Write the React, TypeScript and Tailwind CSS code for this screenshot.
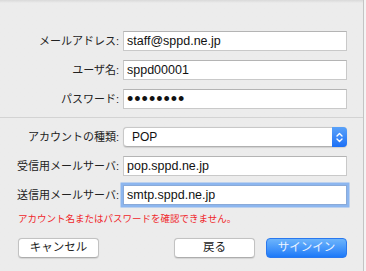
import { ChangeEvent, useState } from 'react';

const jp = { fontFamily: '"Liberation Sans", "Noto Sans CJK JP", sans-serif' };

function Field({
  label,
  value,
  type = 'text',
  focused = false,
  onChange,
}: {
  label: string;
  value: string;
  type?: string;
  focused?: boolean;
  onChange: (v: string) => void;
}) {
  return (
    <div className="flex items-center h-[20px]">
      <label className="w-[121px] pr-[2px] text-right text-[11px] text-[#222] whitespace-nowrap" style={jp}>
        {label}
      </label>
      <input
        type={type}
        value={value}
        onChange={(e: ChangeEvent<HTMLInputElement>) => onChange(e.target.value)}
        className={
          'ml-[2px] w-[224px] h-[20px] bg-white border px-[3px] text-[#111] outline-none ' +
          (type === 'password' ? 'text-[18px] tracking-[1px] ' : 'text-[12.5px] ') +
          (focused
            ? 'border-[#8aaad8] shadow-[0_0_0_2.5px_#8cb6ef]'
            : 'border-[#c9c9c9] border-t-[#b4b4b4]')
        }
        style={jp}
      />
    </div>
  );
}

export default function App() {
  const [form, setForm] = useState({
    email: 'staff@sppd.ne.jp',
    user: 'sppd00001',
    password: 'password',
    type: 'POP',
    incoming: 'pop.sppd.ne.jp',
    outgoing: 'smtp.sppd.ne.jp',
  });

  const set = (key: keyof typeof form) => (v: string) => setForm({ ...form, [key]: v });

  return (
    <div className="w-[366px] h-[271px] bg-[#f4f4f4] overflow-hidden">
      <div className="w-[364px] h-full bg-[#ececec] border-r border-[#c4c4c4] bg-gradient-to-b from-[#d9d9d9] via-[#ececec] via-[3px] to-[#ececec]">
        {/* Account */}
        <div className="pt-[31px] flex flex-col gap-[9px]">
          <Field label="メールアドレス:" value={form.email} onChange={set('email')} />
          <Field label="ユーザ名:" value={form.user} onChange={set('user')} />
          <Field label="パスワード:" type="password" value={form.password} onChange={set('password')} />
        </div>

        <div className="mt-[8px] h-px bg-[#d3d3d3]" />

        {/* Servers */}
        <div className="pt-[9px] flex flex-col gap-[9px]">
          <div className="flex items-center h-[20px]">
            <span className="w-[121px] pr-[2px] text-right text-[11px] text-[#222] whitespace-nowrap" style={jp}>
              アカウントの種類:
            </span>
            <div className="ml-[2px] w-[224px] h-[20px] flex bg-white rounded-[4px] border border-[#c8c8c8] border-b-[#b0b0b0] shadow-[0_0.5px_1px_rgba(0,0,0,0.12)]">
              <span className="flex-1 pl-[8px] text-[12px] leading-[18px] text-[#111]" style={jp}>
                {form.type}
              </span>
              <div className="w-[15px] -my-px -mr-px rounded-r-[4px] bg-gradient-to-b from-[#5aa2f9] to-[#1b6ff6] flex items-center justify-center">
                <svg width="9" height="13" viewBox="0 0 9 13" fill="none" stroke="white" strokeWidth="1.4" strokeLinecap="round" strokeLinejoin="round">
                  <path d="M2 5 L4.5 2.5 L7 5" />
                  <path d="M2 8 L4.5 10.5 L7 8" />
                </svg>
              </div>
            </div>
          </div>
          <Field label="受信用メールサーバ:" value={form.incoming} onChange={set('incoming')} />
          <Field label="送信用メールサーバ:" value={form.outgoing} focused onChange={set('outgoing')} />
        </div>

        {/* Error */}
        <p className="mt-[8px] pl-[18px] text-[9.5px] leading-[12px] text-[#f0262a]" style={jp}>
          アカウント名またはパスワードを確認できません。
        </p>

        {/* Buttons */}
        <div className="mt-[13px] pl-[18px] flex items-center">
          <button
            className="w-[81px] h-[20px] bg-white rounded-[4px] border border-[#c2c2c2] border-b-[#adadad] text-[11.5px] text-[#222] shadow-[0_0.5px_1px_rgba(0,0,0,0.1)]"
            style={jp}
          >
            キャンセル
          </button>
          <button
            className="ml-[75px] w-[81px] h-[20px] bg-white rounded-[4px] border border-[#c2c2c2] border-b-[#adadad] text-[11.5px] text-[#222] shadow-[0_0.5px_1px_rgba(0,0,0,0.1)]"
            style={jp}
          >
            戻る
          </button>
          <button
            className="ml-[11px] w-[81px] h-[20px] rounded-[4px] border border-[#2a78ee] bg-gradient-to-b from-[#6cb4fb] to-[#1b79f8] text-[11.5px] text-[#eef4ff]"
            style={jp}
          >
            サインイン
          </button>
        </div>
      </div>
    </div>
  );
}
